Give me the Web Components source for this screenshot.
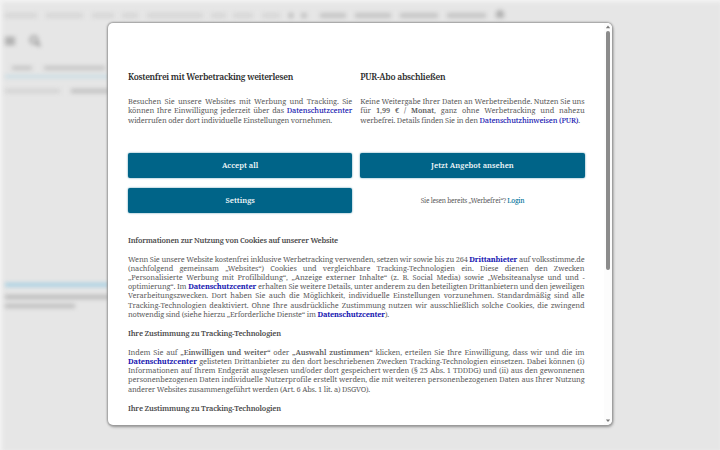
<!DOCTYPE html>
<html lang="de">
<head>
<meta charset="utf-8">
<title>Volksstimme</title>
<style>
  body{
    background-color: #e6e6e6;
    height: 450px;
    margin: 0;
    overflow: hidden;
  }
</style>
</head>
<body>
<consent-page></consent-page>
<script>
class BlurredPage extends HTMLElement {

  constructor () {
    super()
    this.shadow = this.attachShadow({ mode: 'open' })
  }

  connectedCallback () {
    this.render()
  }

  row (top, height, color, bars) {
    return bars.map(([from, to, shade]) =>
      `<rect x="${from}" y="${top}" width="${to - from}" height="${height}" fill="${shade || color}" />`
    ).join('')
  }

  render () {
    this.shadow.innerHTML =
    /*html*/`
      <style>
        :host{
          background: #e6e6e6;
          box-shadow: inset 2px 2px 4px #f4f4f4;
          display: block;
          height: 450px;
          width: 720px;
        }

        svg{
          display: block;
          filter: blur(2px);
        }
      </style>
      <svg width="720" height="450" viewBox="0 0 720 450">
        ${this.row(13, 5, '#d6d6d6', [[5, 37], [46, 83], [92, 114], [122, 138], [147, 203], [211, 226], [233, 253], [262, 280], [289, 293, '#b5b5b5'], [301, 307, '#c2c2c2'], [320, 346, '#c4c4c4'], [355, 391, '#c4c4c4'], [400, 438, '#c4c4c4'], [447, 486, '#c4c4c4']])}
        <path d="M496 18v-4a4 4 0 0 1 8 0v4z" fill="#b2b2b2" />
        <path d="M5 38h10M5 41h10M5 44h10" stroke="#9c9c9c" stroke-width="2" />
        <circle cx="34" cy="40" r="3.5" fill="none" stroke="#aaa" stroke-width="2.5" />
        <path d="M36 42l4 4" stroke="#999" stroke-width="2.5" />
        ${this.row(66, 4, '#c4c4c4', [[12, 32], [44, 105]])}
        ${this.row(75, 3, '#c8dde5', [[5, 112]])}
        ${this.row(89, 4, '#d2d2d2', [[5, 60], [71, 112, '#bebebe']])}
        ${this.row(283, 3.5, '#a0cde2', [[5, 112]])}
        ${this.row(295, 4, '#b8b8b8', [[5, 112]])}
        ${this.row(304, 4, '#bbb', [[5, 75]])}
      </svg>
    `
  }
}

customElements.define('blurred-page', BlurredPage)

// One line of copy, tracked so that its natural width equals "width"
class TextLine extends HTMLElement {

  constructor () {
    super()
    this.shadow = this.attachShadow({ mode: 'open' })
  }

  connectedCallback () {
    this.shadow.innerHTML =
    /*html*/`
      <style>
        :host{
          display: block;
          white-space: nowrap;
        }
      </style>
      <span><slot></slot></span>
    `
    const width = Number(this.getAttribute('width'))
    const span = this.shadow.querySelector('span')
    if (width) {
      const spacing = (width - span.getBoundingClientRect().width) / this.textContent.length
      const spaces = this.textContent.split(' ').length - 1
      // wide gaps between the words belong to the justified text, not to the letters
      const letter = Math.min(spacing, -0.1)
      span.style.letterSpacing = `${letter}px`
      span.style.wordSpacing = `${(spacing - letter) * this.textContent.length / spaces}px`
    }
  }
}

customElements.define('text-line', TextLine)

class ConsentButton extends HTMLElement {

  constructor () {
    super()
    this.shadow = this.attachShadow({ mode: 'open' })
  }

  connectedCallback () {
    this.shadow.innerHTML =
    /*html*/`
      <style>
        :host{
          display: block;
        }

        button{
          background-color: #006488;
          border: 0;
          border-radius: 2px;
          box-shadow: 0 0 2px #468da6;
          color: #f2f8fa;
          cursor: pointer;
          display: block;
          font: 600 7.5px/25px 'Noto Serif', 'DejaVu Serif Condensed', 'DejaVu Serif', serif;
          font-stretch: semi-condensed;
          height: 25px;
          padding: 0;
          width: 100%;
        }
      </style>
      <button><slot></slot></button>
    `
  }
}

customElements.define('consent-button', ConsentButton)

class ScrollBar extends HTMLElement {

  constructor () {
    super()
    this.shadow = this.attachShadow({ mode: 'open' })
  }

  connectedCallback () {
    this.shadow.innerHTML =
    /*html*/`
      <style>
        :host{
          align-items: center;
          background-color: #fcfcfc;
          display: flex;
          flex-direction: column;
          width: 8px;
        }

        .thumb{
          background-color: #8b8b8b;
          border-radius: 2px;
          height: 239px;
          width: 4px;
        }

        .down{
          margin-top: auto;
        }

        svg{
          display: block;
          fill: #777;
          height: 8px;
          width: 8px;
        }
      </style>
      <svg viewBox="0 0 8 8"><path d="M4 2.6l2.2 2.6H1.8z" /></svg>
      <div class="thumb"></div>
      <svg class="down" viewBox="0 0 8 8"><path d="M4 5l2.2-2.6H1.8z" /></svg>
    `
  }
}

customElements.define('scroll-bar', ScrollBar)

class ConsentDialog extends HTMLElement {

  constructor () {
    super()
    this.shadow = this.attachShadow({ mode: 'open' })
  }

  connectedCallback () {
    this.render()
  }

  render () {
    this.shadow.innerHTML =
    /*html*/`
      <style>
        :host{
          background-color: #fff;
          border-radius: 5px;
          box-shadow: 0 0 2px 1px #999, 1px 2px 3px #999;
          color: #5c5c5c;
          display: flex;
          font: 400 7.4px/9.15px 'Noto Serif', 'DejaVu Serif Condensed', 'DejaVu Serif', serif;
          font-stretch: semi-condensed;
          height: 402px;
          overflow: hidden;
          width: 504px;
        }

        .content{
          box-sizing: border-box;
          flex: 1;
          padding: 47.7px 19.6px 0 20px;
        }

        .offers{
          column-gap: 8px;
          display: grid;
          grid-template-columns: 1fr 1fr;
          grid-template-rows: auto 55.4px 35px 25px;
        }

        h2{
          color: #2a2a2a;
          font-size: 8.5px;
          font-weight: 600;
          line-height: 12px;
          margin: 0 0 14.5px;
        }

        .login{
          display: flex;
          font-size: 6.6px;
          justify-content: center;
          line-height: 25px;
        }

        a{
          color: #1515b0;
          text-decoration: none;
        }

        b{
          font-weight: 600;
        }

        .info a{
          font-weight: 700;
        }

        .offers a{
          font-weight: 500;
        }

        .login a{
          color: #007299;
        }

        .info{
          padding-top: 23px;
        }

        h3{
          color: #484848;
          font-size: 7.4px;
          font-weight: 600;
          line-height: 9.15px;
          margin: 0 0 10px;
        }

        .info section{
          margin-bottom: 10px;
        }
      </style>
      <div class="content">
        <div class="offers">
          <h2><text-line width="165">Kostenfrei mit Werbetracking weiterlesen</text-line></h2>
          <h2><text-line width="85">PUR-Abo abschließen</text-line></h2>
          <div>
            <text-line width="224.2">Besuchen Sie unsere Websites mit Werbung und Tracking. Sie</text-line>
            <text-line width="224.2">können Ihre Einwilligung jederzeit über das <a>Datenschutzcenter</a></text-line>
            <text-line width="204">widerrufen oder dort individuelle Einstellungen vornehmen.</text-line>
          </div>
          <div>
            <text-line width="224.2">Keine Weitergabe Ihrer Daten an Werbetreibende. Nutzen Sie uns</text-line>
            <text-line width="224.2">für <b>1,99 € / Monat</b>, ganz ohne Werbetracking und nahezu</text-line>
            <text-line width="219.5">werbefrei. Details finden Sie in den <a>Datenschutzhinweisen (PUR)</a>.</text-line>
          </div>
          <consent-button>Accept all</consent-button>
          <consent-button>Jetzt Angebot ansehen</consent-button>
          <consent-button>Settings</consent-button>
          <div class="login"><text-line width="103.5">Sie lesen bereits „Werbefrei“? <a>Login</a></text-line></div>
        </div>
        <div class="info">
          <h3><text-line width="210">Informationen zur Nutzung von Cookies auf unserer Website</text-line></h3>
          <section>
            <text-line width="456.4">Wenn Sie unsere Website kostenfrei inklusive Werbetracking verwenden, setzen wir sowie bis zu 264 <a>Drittanbieter</a> auf volksstimme.de</text-line>
            <text-line width="456.4">(nachfolgend gemeinsam „Websites“) Cookies und vergleichbare Tracking-Technologien ein. Diese dienen den Zwecken</text-line>
            <text-line width="456.4">„Personalisierte Werbung mit Profilbildung“, „Anzeige externer Inhalte“ (z. B. Social Media) sowie „Websiteanalyse und und -</text-line>
            <text-line width="456.4">optimierung“. Im <a>Datenschutzcenter</a> erhalten Sie weitere Details, unter anderem zu den beteiligten Drittanbietern und den jeweiligen</text-line>
            <text-line width="456.4">Verarbeitungszwecken. Dort haben Sie auch die Möglichkeit, individuelle Einstellungen vorzunehmen. Standardmäßig sind alle</text-line>
            <text-line width="456.4">Tracking-Technologien deaktiviert. Ohne Ihre ausdrückliche Zustimmung nutzen wir ausschließlich solche Cookies, die zwingend</text-line>
            <text-line width="261">notwendig sind (siehe hierzu „Erforderliche Dienste“ im <a>Datenschutzcenter</a>).</text-line>
          </section>
          <h3><text-line width="153">Ihre Zustimmung zu Tracking-Technologien</text-line></h3>
          <section>
            <text-line width="456.4">Indem Sie auf <b>„Einwilligen und weiter“</b> oder <b>„Auswahl zustimmen“</b> klicken, erteilen Sie Ihre Einwilligung, dass wir und die im</text-line>
            <text-line width="456.4"><a>Datenschutzcenter</a> gelisteten Drittanbieter zu den dort beschriebenen Zwecken Tracking-Technologien einsetzen. Dabei können (i)</text-line>
            <text-line width="456.4">Informationen auf Ihrem Endgerät ausgelesen und/oder dort gespeichert werden (§ 25 Abs. 1 TDDDG) und (ii) aus den gewonnenen</text-line>
            <text-line width="456.4">personenbezogenen Daten individuelle Nutzerprofile erstellt werden, die mit weiteren personenbezogenen Daten aus Ihrer Nutzung</text-line>
            <text-line width="242">anderer Websites zusammengeführt werden (Art. 6 Abs. 1 lit. a) DSGVO).</text-line>
          </section>
          <h3><text-line width="153">Ihre Zustimmung zu Tracking-Technologien</text-line></h3>
        </div>
      </div>
      <scroll-bar></scroll-bar>
    `
  }
}

customElements.define('consent-dialog', ConsentDialog)

class ConsentPage extends HTMLElement {

  constructor () {
    super()
    this.shadow = this.attachShadow({ mode: 'open' })
  }

  connectedCallback () {
    this.shadow.innerHTML =
    /*html*/`
      <style>
        :host{
          display: grid;
          height: 450px;
          width: 720px;
        }

        blurred-page, consent-dialog{
          grid-area: 1 / 1;
        }

        consent-dialog{
          margin: 23px 0 0 108px;
          z-index: 1;
        }
      </style>
      <blurred-page></blurred-page>
      <consent-dialog></consent-dialog>
    `
  }
}

customElements.define('consent-page', ConsentPage)
</script>
</body>
</html>
